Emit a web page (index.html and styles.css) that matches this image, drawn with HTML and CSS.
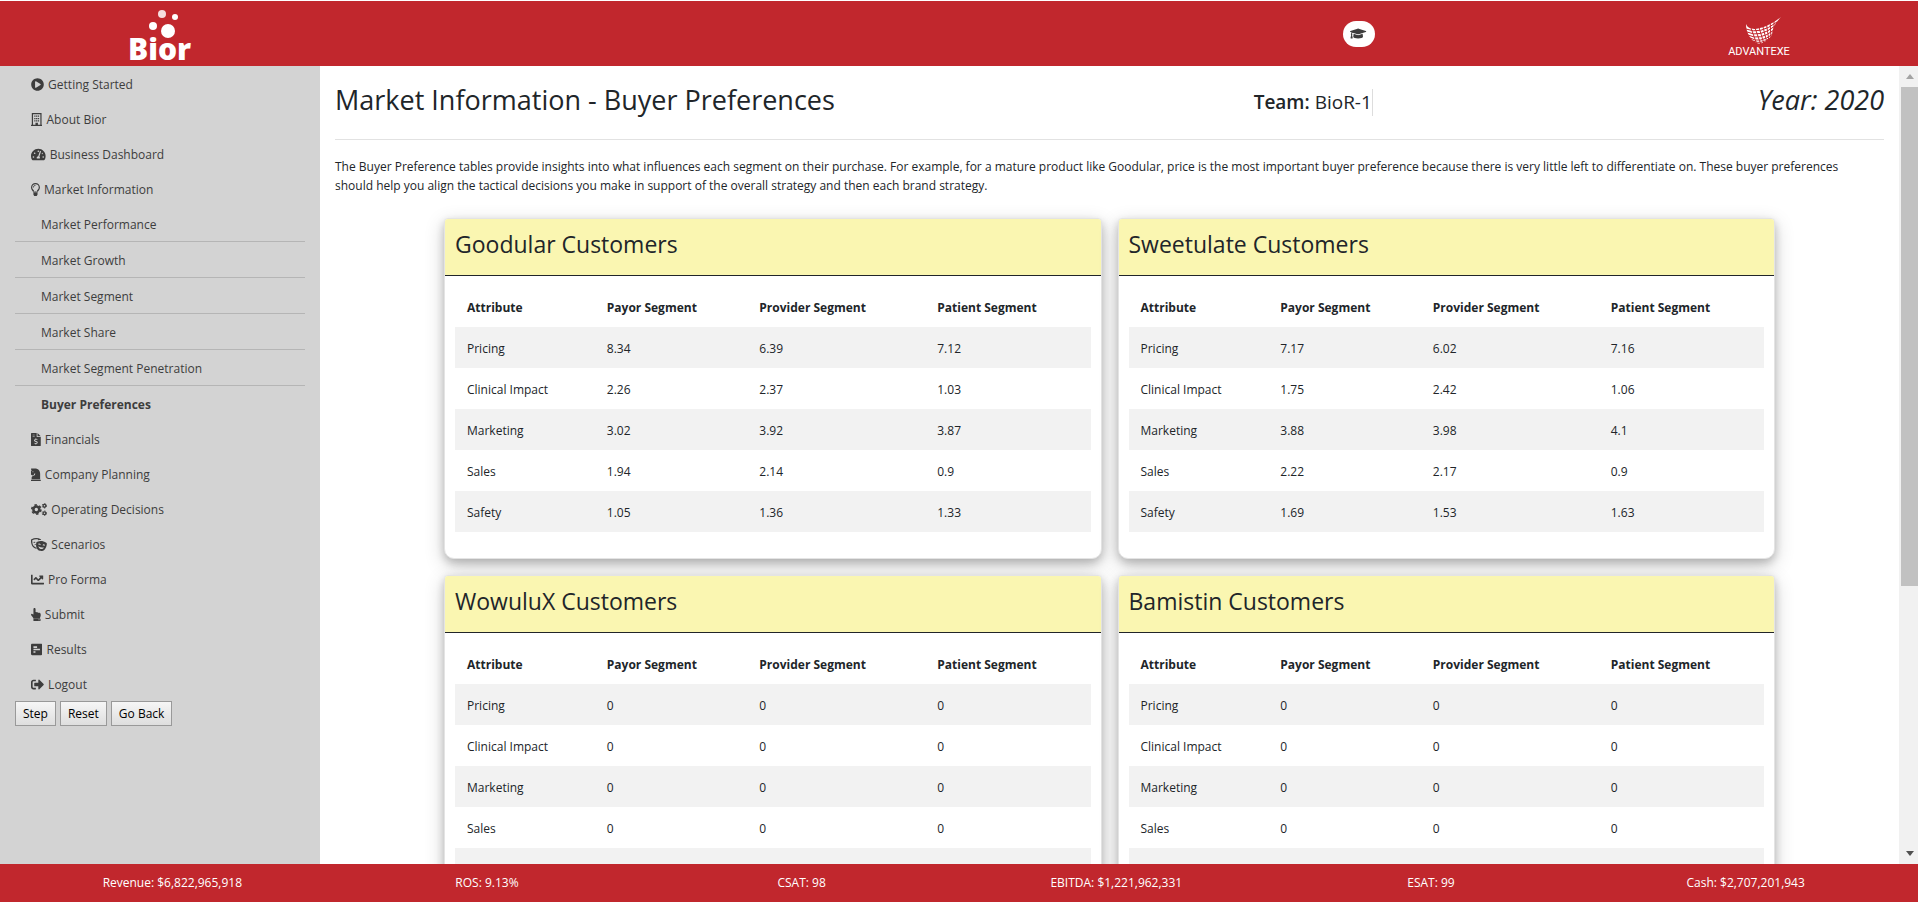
FILE: index.html
```
<!DOCTYPE html>
<html lang="en">
<head>
    <meta charset="UTF-8">
    <meta name="viewport" content="width=device-width, initial-scale=1.0">
    <title>Bior - Buyer Preferences</title>
    <link rel="stylesheet" href="styles.css">
</head>
<body>
    <header class="topbar">
        <a class="logo" href="#">
            <svg width="70" height="65" viewBox="0 0 70 65" fill="#fff">
                <circle cx="37" cy="13" r="4" opacity=".85"/>
                <circle cx="50" cy="16" r="3"/>
                <circle cx="28" cy="25" r="4"/>
                <circle cx="43" cy="30" r="7"/>
                <text class="logo-text" x="3" y="59">Bior</text>
            </svg>
        </a>
        <button class="learn" type="button" aria-label="Learning">
            <svg class="icon" viewBox="0 0 640 512"><path d="M622.34 153.2L343.4 67.5c-15.2-4.67-31.6-4.67-46.79 0L17.66 153.2c-23.54 7.23-23.54 38.36 0 45.59l48.63 14.94c-10.67 13.19-17.23 29.28-17.88 46.9C38.78 266.15 32 276.11 32 288c0 10.78 5.68 19.85 13.86 25.65L20.33 428.53C18.11 438.52 25.71 448 35.94 448h56.11c10.24 0 17.84-9.48 15.62-19.47L82.14 313.65C90.32 307.85 96 298.78 96 288c0-11.57-6.47-21.25-15.66-26.87.76-15.02 8.44-28.3 20.69-36.72L296.6 284.5c9.06 2.78 26.44 6.25 46.79 0l278.95-85.7c23.55-7.24 23.55-38.36 0-45.6zM352.79 315.09c-28.53 8.76-52.84 3.92-65.59 0l-145.02-44.55L128 384c0 35.35 85.96 64 192 64s192-28.65 192-64l-14.18-113.47-145.03 44.56z"/></svg>
        </button>
        <a class="brand" href="#">
            <svg width="76" height="50" viewBox="0 0 76 50">
                <path fill="#fff" d="M26 15C29 24 46 20 61 8C55 14 52 20 52 26C48 32 41 36 37 34C30 31 26 23 26 15z"/>
                <g fill="none" stroke="#c1272d">
                    <path d="M26 20Q40 26 57 13M27 23Q40 29 55 17M28 26Q40 32 54 21M30 29Q40 35 53 25M33 32Q41 36 50 29"/>
                    <path d="M30 16L37 36M34 16L41 36M38 15L44 35M42 14L47 34M46 12L49 32M50 10L51 30M54 9L54 26"/>
                </g>
                <text class="brand-text" x="39" y="46" text-anchor="middle">ADVANTEXE</text>
            </svg>
        </a>
    </header>

    <div class="page">
        <aside class="sidebar">
            <nav>
                <a class="nav-item" href="#"><svg class="icon" viewBox="0 0 512 512"><path d="M256 8C119 8 8 119 8 256s111 248 248 248 248-111 248-248S393 8 256 8zm115.700 272l-176 101c-15.800 8.800-35.700-2.500-35.700-21V152c0-18.400 19.800-29.800 35.700-21l176 107c16.400 9.200 16.400 32.900 0 42z"/></svg> Getting Started</a>
                <a class="nav-item" href="#"><svg class="icon" viewBox="0 0 448 512"><path fill-rule="evenodd" d="M32 0h384v464h32v48H0v-48h32zM80 48v416h96v-80h96v80h96V48zM128 96h50v50h-50zM199 96h50v50h-50zM270 96h50v50h-50zM128 192h50v50h-50zM199 192h50v50h-50zM270 192h50v50h-50zM128 288h50v50h-50zM199 288h50v50h-50zM270 288h50v50h-50z"/></svg> About Bior</a>
                <a class="nav-item" href="#"><svg class="icon" viewBox="0 0 576 512"><path fill-rule="evenodd" d="M288 32C129 32 0 161 0 320c0 53 14 102 39 145 6 9 16 15 27 15h444c11 0 21-6 27-15 25-43 39-92 39-145C576 161 447 32 288 32zM288 96a32 32 0 1 1 0 64 32 32 0 1 1 0-64zM96 384a32 32 0 1 1 0-64 32 32 0 1 1 0 64zM144 240a32 32 0 1 1 0-64 32 32 0 1 1 0 64zM391 151l-61 184c13 12 22 29 22 49 0 12-3 22-9 32H233c-6-10-9-20-9-32 0-34 27-62 61-64l61-184c10-30 55-15 45 15zM432 176a32 32 0 1 1-10 62l14-58zM480 384a32 32 0 1 1 0-64 32 32 0 1 1 0 64z"/></svg> Business Dashboard</a>
                <a class="nav-item" href="#"><svg class="icon" viewBox="0 0 352 512"><path fill-rule="evenodd" d="M176 0C79 0 0 79 0 176c0 44 17 85 44 116 23 26 52 71 52 108v60l32 52h96l32-52v-60c0-37 29-82 52-108 27-31 44-72 44-116C352 79 273 0 176 0zM96 368h160v-32H96zM268 260c-22 25-42 56-54 92h-76c-12-36-32-67-54-92-22-25-36-52-36-84a128 128 0 1 1 256 0c0 32-14 59-36 84zM176 80c-53 0-96 43-96 96h32c0-35 29-64 64-64z"/></svg> Market Information</a>
                <ul class="subnav">
                    <li><a href="#">Market Performance</a></li>
                    <li><a href="#">Market Growth</a></li>
                    <li><a href="#">Market Segment</a></li>
                    <li><a href="#">Market Share</a></li>
                    <li><a href="#">Market Segment Penetration</a></li>
                    <li><a class="active" href="#">Buyer Preferences</a></li>
                </ul>
                <a class="nav-item" href="#"><svg class="icon" viewBox="0 0 384 512"><path fill-rule="evenodd" d="M24 0h200v136c0 13 11 24 24 24h136v328c0 13-11 24-24 24H24c-13 0-24-11-24-24V24C0 11 11 0 24 0zM256 0l128 128H256zM64 64v28h80V64zM64 124v28h80v-28zM176 208v26c-70 8-76 88-16 106l50 15c22 8 18 39-4 39h-36c-10 0-18-4-26-10l-24 24c16 12 34 20 56 20v28h32v-28c70-8 76-88 16-106l-50-15c-22-8-18-39 4-39h36c10 0 18 4 26 10l24-24c-16-12-34-20-56-20v-26z"/></svg> Financials</a>
                <a class="nav-item" href="#"><svg class="icon" viewBox="0 0 384 512"><path fill-rule="evenodd" d="M0 464h384v48H0zM19 272l47 21c6 3 14 3 20-1l14-12c8-5 10-9 12-16l12-38 40-18v28c0 24-14 46-35 57l-50 20c-37 14-54 42-54 72v55h335V224C360 100 280 16 160 16H12C5 16 0 27 0 34l4 24 24 38-18 16C4 118 0 126 0 134v109c0 13 7 24 19 29zM76 128a20 20 0 1 1 0 40 20 20 0 1 1 0-40z"/></svg> Company Planning</a>
                <a class="nav-item" href="#"><svg class="icon" viewBox="0 0 640 512"><g fill="none" stroke="#3d3d3d"><circle cx="210" cy="256" r="116" stroke-width="100"/><circle cx="210" cy="256" r="180" stroke-width="64" stroke-dasharray="94 94"/><circle cx="530" cy="110" r="56" stroke-width="52"/><circle cx="530" cy="110" r="90" stroke-width="34" stroke-dasharray="47 47"/><circle cx="530" cy="402" r="56" stroke-width="52"/><circle cx="530" cy="402" r="90" stroke-width="34" stroke-dasharray="47 47"/></g></svg> Operating Decisions</a>
                <a class="nav-item" href="#"><svg class="icon" viewBox="0 0 640 512"><path fill-rule="evenodd" d="M20 50C130-10 270-15 385 45l15 35c-45-5-90 2-120 12v-32C200 38 115 50 50 85c0 90 10 175 50 225 22 30 60 55 105 70l20 50C155 412 95 375 62 330 10 262-5 165 0 80c1-13 8-24 20-30zM100 160l60-14 14 36-66 16zM120 290c10-34 40-55 74-58v38c-30 4-50 14-74 20zM250 148c110-50 245-30 350 36 18 11 28 24 26 42-12 90-36 170-86 222-48 50-120 74-186 58-74-18-122-80-142-146-18-60-16-124 0-182 4-14 22-22 38-30zM292 224l-10 40c34-10 66-4 88 18l8-36c-24-26-56-32-86-22zM470 258l-10 40c28-12 62-8 84 12l8-36c-24-26-54-30-82-16zM288 326c14 60 52 100 98 110 50 8 96-16 124-62-78 14-150-2-222-48z"/></svg> Scenarios</a>
                <a class="nav-item" href="#"><svg class="icon" viewBox="0 0 512 512"><path d="M496 384H64V80c0-8.840-7.160-16-16-16H16C7.160 64 0 71.160 0 80v336c0 17.670 14.330 32 32 32h464c8.840 0 16-7.160 16-16v-32c0-8.840-7.160-16-16-16zM464 96H345.940c-21.380 0-32.090 25.850-16.970 40.970l32.400 32.400L288 242.750l-73.370-73.370c-12.500-12.500-32.760-12.500-45.250 0l-68.690 68.690c-6.250 6.250-6.250 16.380 0 22.630l22.620 22.620c6.250 6.250 16.380 6.250 22.630 0L192 237.250l73.370 73.370c12.500 12.500 32.760 12.500 45.250 0l96-96 32.400 32.400c15.120 15.120 40.970 4.410 40.970-16.970V112c.010-8.840-7.150-16-15.990-16z"/></svg> Pro Forma</a>
                <a class="nav-item" href="#"><svg class="icon" viewBox="0 0 384 512"><path fill-rule="evenodd" d="M96 50C96 20 114 0 138 0s42 20 42 48v112c20-12 48-8 60 14 20-8 46 0 56 20 42-10 88 10 88 78 0 70-32 80-32 150H96c0-50-80-110-94-144-10-28 18-58 44-46l50 28zM96 416h256c13 0 24 11 24 24v48c0 13-11 24-24 24H96zM316 444a20 20 0 1 0 0 40 20 20 0 1 0 0-40z"/></svg> Submit</a>
                <a class="nav-item" href="#"><svg class="icon" viewBox="0 0 448 512"><path fill-rule="evenodd" d="M48 32h352c27 0 48 21 48 48v352c0 27-21 48-48 48H48c-27 0-48-21-48-48V80c0-27 21-48 48-48zM96 128v64h144v-64zM96 224v64h256v-64zM96 320v64h80v-64z"/></svg> Results</a>
                <a class="nav-item" href="#"><svg class="icon" viewBox="0 0 512 512"><path d="M497 273L329 441c-15 15-41 4.500-41-17v-96H152c-13.300 0-24-10.700-24-24v-96c0-13.300 10.700-24 24-24h136V88c0-21.400 25.900-32 41-17l168 168c9.300 9.400 9.300 24.600 0 34zM192 436v-40c0-6.600-5.400-12-12-12H96c-17.700 0-32-14.300-32-32V160c0-17.700 14.300-32 32-32h84c6.600 0 12-5.400 12-12V76c0-6.600-5.400-12-12-12H96c-53 0-96 43-96 96v192c0 53 43 96 96 96h84c6.600 0 12-5.400 12-12z"/></svg> Logout</a>
            </nav>
            <div class="actions">
                <button type="button">Step</button>
                <button type="button">Reset</button>
                <button type="button">Go Back</button>
            </div>
        </aside>

        <main class="content">
            <div class="title-row">
                <h1>Market Information - Buyer Preferences</h1>
                <p class="team"><strong>Team:</strong> BioR-1</p>
                <p class="year">Year: 2020</p>
            </div>
            <p class="intro">The Buyer Preference tables provide insights into what influences each segment on their purchase. For example, for a mature product like Goodular, price is the most important buyer preference because there is very little left to differentiate on. These buyer preferences should help you align the tactical decisions you make in support of the overall strategy and then each brand strategy.</p>

            <div class="cards">
                <section class="card">
                    <h2>Goodular Customers</h2>
                    <table>
                        <thead>
                            <tr><th>Attribute</th><th>Payor Segment</th><th>Provider Segment</th><th>Patient Segment</th></tr>
                        </thead>
                        <tbody>
                            <tr><td>Pricing</td><td>8.34</td><td>6.39</td><td>7.12</td></tr>
                            <tr><td>Clinical Impact</td><td>2.26</td><td>2.37</td><td>1.03</td></tr>
                            <tr><td>Marketing</td><td>3.02</td><td>3.92</td><td>3.87</td></tr>
                            <tr><td>Sales</td><td>1.94</td><td>2.14</td><td>0.9</td></tr>
                            <tr><td>Safety</td><td>1.05</td><td>1.36</td><td>1.33</td></tr>
                        </tbody>
                    </table>
                </section>
                <section class="card">
                    <h2>Sweetulate Customers</h2>
                    <table>
                        <thead>
                            <tr><th>Attribute</th><th>Payor Segment</th><th>Provider Segment</th><th>Patient Segment</th></tr>
                        </thead>
                        <tbody>
                            <tr><td>Pricing</td><td>7.17</td><td>6.02</td><td>7.16</td></tr>
                            <tr><td>Clinical Impact</td><td>1.75</td><td>2.42</td><td>1.06</td></tr>
                            <tr><td>Marketing</td><td>3.88</td><td>3.98</td><td>4.1</td></tr>
                            <tr><td>Sales</td><td>2.22</td><td>2.17</td><td>0.9</td></tr>
                            <tr><td>Safety</td><td>1.69</td><td>1.53</td><td>1.63</td></tr>
                        </tbody>
                    </table>
                </section>
                <section class="card">
                    <h2>WowuluX Customers</h2>
                    <table>
                        <thead>
                            <tr><th>Attribute</th><th>Payor Segment</th><th>Provider Segment</th><th>Patient Segment</th></tr>
                        </thead>
                        <tbody>
                            <tr><td>Pricing</td><td>0</td><td>0</td><td>0</td></tr>
                            <tr><td>Clinical Impact</td><td>0</td><td>0</td><td>0</td></tr>
                            <tr><td>Marketing</td><td>0</td><td>0</td><td>0</td></tr>
                            <tr><td>Sales</td><td>0</td><td>0</td><td>0</td></tr>
                            <tr><td>Safety</td><td>0</td><td>0</td><td>0</td></tr>
                        </tbody>
                    </table>
                </section>
                <section class="card">
                    <h2>Bamistin Customers</h2>
                    <table>
                        <thead>
                            <tr><th>Attribute</th><th>Payor Segment</th><th>Provider Segment</th><th>Patient Segment</th></tr>
                        </thead>
                        <tbody>
                            <tr><td>Pricing</td><td>0</td><td>0</td><td>0</td></tr>
                            <tr><td>Clinical Impact</td><td>0</td><td>0</td><td>0</td></tr>
                            <tr><td>Marketing</td><td>0</td><td>0</td><td>0</td></tr>
                            <tr><td>Sales</td><td>0</td><td>0</td><td>0</td></tr>
                            <tr><td>Safety</td><td>0</td><td>0</td><td>0</td></tr>
                        </tbody>
                    </table>
                </section>
            </div>
        </main>

        <div class="scrollbar" aria-hidden="true">
            <span class="arrow up"></span>
            <span class="track"><span class="thumb"></span></span>
            <span class="arrow down"></span>
        </div>
    </div>

    <footer class="stats">
        <span>Revenue: $6,822,965,918</span>
        <span>ROS: 9.13%</span>
        <span>CSAT: 98</span>
        <span>EBITDA: $1,221,962,331</span>
        <span>ESAT: 99</span>
        <span>Cash: $2,707,201,943</span>
    </footer>
</body>
</html>
```
FILE: styles.css
```
* {
    box-sizing: border-box;
}
body {
    margin: 0;
    padding-top: 1px;
    height: 100vh;
    display: flex;
    flex-direction: column;
    overflow: hidden;
    font-family: "Open Sans", "Noto Sans", sans-serif;
    font-size: 12px;
    line-height: 19px;
    color: #212529;
    background-color: #fff;
}
a {
    color: inherit;
    text-decoration: none;
}
h1, h2, p {
    margin: 0;
    font-weight: 500;
}

/* Top bar */
.topbar {
    flex: none;
    display: grid;
    grid-template-columns: repeat(12, 1fr);
    align-items: center;
    justify-items: center;
    height: 65px;
    background-color: #c1272d;
}
.logo {
    grid-column: 1 / span 2;
    display: flex;
}
.logo-text {
    font-size: 30px;
    font-weight: 800;
}
.learn {
    grid-column: 9;
    display: flex;
    align-items: center;
    justify-content: center;
    width: 32px;
    height: 26px;
    padding: 0;
    border: 0;
    border-radius: 13px;
    background-color: #fff;
}
.brand {
    grid-column: 11 / span 2;
    display: flex;
}
.brand-text {
    font-family: Roboto, sans-serif;
    font-size: 11px;
    fill: #fff;
}
.icon {
    height: 13px;
    fill: #3d3d3d;
    vertical-align: -2px;
}

/* Side menu */
.page {
    flex: 1;
    display: flex;
    min-height: 0;
}
.sidebar {
    flex: none;
    width: 320px;
    padding: 0 15px;
    background-color: #d3d3d3;
    color: #3d3d3d;
}
.nav-item {
    display: block;
    padding: 9px 16px 7px;
}
.nav-item .icon {
    margin-right: 1px;
}
.subnav {
    margin: 0;
    padding: 0;
    list-style: none;
}
.subnav li {
    border-bottom: 1px solid #b5b5b5;
}
.subnav li:last-child {
    border-bottom: 0;
}
.subnav a {
    display: block;
    padding: 9px 26px 7px;
}
.subnav .active {
    font-weight: bold;
}
.actions {
    display: flex;
    gap: 4px;
}
.actions button {
    height: 25px;
    padding: 0 7px;
    border: 1px solid #999;
    background: linear-gradient(#f6f6f6, #dedede);
    font: inherit;
    color: #000;
}

/* Main content */
.content {
    flex: 1;
    min-width: 0;
    padding: 0 15px;
    overflow: hidden;
}
.title-row {
    display: grid;
    grid-template-columns: auto 1fr 33%;
    align-items: start;
    height: 74px;
    padding-top: 16px;
    border-bottom: 1px solid #e2e2e2;
}
.title-row h1,
.year {
    font-size: 27px;
    line-height: 36px;
}
.team {
    justify-self: end;
    margin-top: 7px;
    border-right: 1px solid #ddd;
    font-size: 19px;
    line-height: 27px;
}
.team strong {
    font-weight: 600;
}
.year {
    text-align: right;
    font-style: italic;
}
.intro {
    padding: 17px 10px 23px 0;
    font-weight: 400;
}
.cards {
    display: grid;
    grid-template-columns: 1fr 1fr;
    gap: 16px;
    margin: 0 109px;
}
.card {
    border: 1px solid #e4e4e4;
    border-radius: 4px 4px 10px 10px;
    padding-bottom: 26px;
    background-color: #fff;
    box-shadow: 0 4px 8px rgba(0, 0, 0, 0.2), 0 6px 20px rgba(0, 0, 0, 0.19);
}
.card h2 {
    padding: 10px 10px 16px;
    border-bottom: 1px solid #212529;
    border-radius: 3px 3px 0 0;
    background-color: #faf6b1;
    font-size: 23px;
    line-height: 30px;
}
.card table {
    width: calc(100% - 20px);
    margin: 10px 10px 0;
    border-collapse: collapse;
    table-layout: fixed;
}
.card th,
.card td {
    padding: 12px 12px 10px;
    text-align: left;
}
.card th:nth-child(1) {
    width: 22%;
}
.card th:nth-child(2) {
    width: 24%;
}
.card th:nth-child(3) {
    width: 28%;
}
.card tbody tr:nth-child(odd) {
    background-color: #f2f2f2;
}

/* Scrollbar */
.scrollbar {
    flex: none;
    display: flex;
    flex-direction: column;
    width: 19px;
    padding-left: 2px;
    background-color: #f1f1f1;
}
.arrow {
    flex: none;
    height: 21px;
    display: flex;
    align-items: center;
    justify-content: center;
}
.arrow::before {
    content: "";
    border: 4px solid transparent;
}
.arrow.up::before {
    border-top: 0;
    border-bottom: 5px solid #a3a3a3;
}
.arrow.down::before {
    border-bottom: 0;
    border-top: 5px solid #505050;
}
.track {
    flex: 1;
}
.thumb {
    display: block;
    height: 66%;
    background-color: #c1c1c1;
}

/* Bottom bar */
.stats {
    flex: none;
    display: grid;
    grid-template-columns: repeat(6, 1fr);
    padding: 9px 15px 10px;
    background-color: #c1272d;
    color: #fff;
    text-align: center;
}
```
